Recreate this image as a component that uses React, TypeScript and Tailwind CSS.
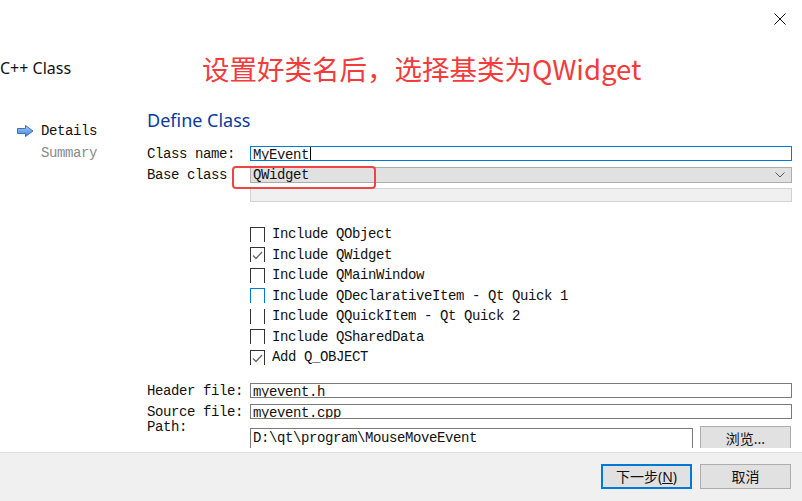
import { Fragment } from 'react'

const mono = "font-['Liberation_Mono','Noto_Sans_CJK_SC',monospace] text-[14px] tracking-[-0.4px] text-[#111]"
const cjk = "font-['Noto_Sans','Noto_Sans_CJK_SC',sans-serif]"

const options = [
    { label: 'Include QObject', box: 'border-t border-x border-[#333]', checked: false },
    { label: 'Include QWidget', box: 'border-t border-x border-[#333]', checked: true },
    { label: 'Include QMainWindow', box: 'border-t border-x border-[#333]', checked: false },
    { label: 'Include QDeclarativeItem - Qt Quick 1', box: 'border-t border-x border-[#0078d7]', checked: false },
    { label: 'Include QQuickItem - Qt Quick 2', box: 'border-x border-[#333]', checked: false },
    { label: 'Include QSharedData', box: 'border-t border-x border-[#333]', checked: false },
    { label: 'Add Q_OBJECT', box: 'border-t border-x border-[#333]', checked: true },
]

function CheckRow({ label, box, checked }: { label: string; box: string; checked: boolean }) {
    return (
        <div className="flex items-center h-[20.5px] pl-[103px]">
            <div className={`w-[15px] h-[15px] shrink-0 ${box}`}>
                {checked && (
                    <svg width="13" height="14" viewBox="0 0 13 14">
                        <polyline points="2,7.5 5,10.5 11,4" fill="none" stroke="#666" strokeWidth="1.3" />
                    </svg>
                )}
            </div>
            <span className={`ml-[7px] leading-[16px] whitespace-pre ${mono}`}>{label}</span>
        </div>
    )
}

function FileRow({ label, value }: { label: string; value: string }) {
    return (
        <div className="flex items-center h-[15px]">
            <span className={`w-[103px] leading-[16px] whitespace-pre ${mono}`}>{label}</span>
            <div className={`w-[542px] h-[15px] border border-[#7a7a7a] pl-[2px] overflow-hidden leading-[16px] ${mono}`}>
                {value}
            </div>
        </div>
    )
}

export default function App() {
    return (
        <div className="w-[802px] h-[501px] bg-white flex flex-col overflow-hidden">
            {/* close */}
            <div className="h-[38px] flex justify-end pt-[13px] pr-[16px] shrink-0">
                <svg width="12" height="12" viewBox="0 0 12 12">
                    <path d="M0.5 0.5 L11.5 11.5 M11.5 0.5 L0.5 11.5" stroke="#111" strokeWidth="1" />
                </svg>
            </div>

            {/* title */}
            <div className="h-[60px] flex items-center shrink-0">
                <span className="w-[202px] font-['Noto_Sans',sans-serif] text-[16px] text-[#111]">C++ Class</span>
                <span className="font-['Noto_Sans_CJK_SC',sans-serif] text-[27.5px] leading-[36px] text-[#f23b3b] whitespace-nowrap">
                    设置好类名后，选择基类为QWidget
                </span>
            </div>

            {/* body */}
            <div className="h-[350px] flex overflow-hidden shrink-0">
                <div className="w-[147px] pt-[23px] flex flex-col gap-[2px] shrink-0">
                    <div className="flex items-center h-[20px]">
                        <svg width="17" height="12" viewBox="0 0 17 12" className="ml-[17px] mr-[7px]">
                            <defs>
                                <linearGradient id="ar" x1="0" y1="0" x2="0" y2="1">
                                    <stop offset="0" stopColor="#a8cdf5" />
                                    <stop offset="1" stopColor="#3f82d6" />
                                </linearGradient>
                            </defs>
                            <polygon points="0.5,3.5 8.5,3.5 8.5,0.5 16,6 8.5,11.5 8.5,8.5 0.5,8.5" fill="url(#ar)" stroke="#3a73bd" strokeWidth="1" />
                        </svg>
                        <span className={`leading-[20px] ${mono}`}>Details</span>
                    </div>
                    <div className={`h-[20px] leading-[20px] pl-[41px] ${mono} !text-[#8a8a8a]`}>Summary</div>
                </div>

                <div className="flex-1 pt-[10px]">
                    <div className="font-['Noto_Sans',sans-serif] text-[18px] leading-[24px] text-[#0a3a9e]">Define Class</div>

                    <div className="mt-[14px] flex items-center h-[15px]">
                        <span className={`w-[103px] leading-[16px] whitespace-pre ${mono}`}>Class name:</span>
                        <div className={`w-[542px] h-[15px] border border-[#0078d7] pl-[2px] overflow-hidden leading-[16px] flex ${mono}`}>
                            MyEvent<span className="w-px h-[13px] bg-black ml-[1px]" />
                        </div>
                    </div>

                    <div className="mt-[6px] flex items-center h-[15px] relative">
                        <span className={`w-[103px] leading-[16px] whitespace-pre ${mono}`}>Base class</span>
                        <div className={`w-[542px] h-[16px] border border-[#adadad] bg-[#e1e1e1] pl-[2px] overflow-hidden leading-[15px] flex justify-between ${mono}`}>
                            <span>QWidget</span>
                            <svg width="10" height="6" viewBox="0 0 10 6" className="mt-[4px] mr-[6px]">
                                <polyline points="0.5,0.5 5,5 9.5,0.5" fill="none" stroke="#555" strokeWidth="1" />
                            </svg>
                        </div>
                        <div className="absolute left-[85px] -top-[1px] w-[144px] h-[23px] border-2 border-[#f04444] rounded-[4px]" />
                    </div>

                    <div className="mt-[6px] ml-[103px] w-[542px] h-[14px] border border-[#d2d2d2] bg-[#f0f0f0]" />

                    <div className="mt-[22px]">
                        {options.map((o) => (
                            <Fragment key={o.label}>
                                <CheckRow {...o} />
                            </Fragment>
                        ))}
                    </div>

                    <div className="mt-[15.5px] flex flex-col gap-[6px]">
                        <FileRow label="Header file:" value="myevent.h" />
                        <FileRow label="Source file:" value="myevent.cpp" />
                    </div>

                    <div className="flex items-start">
                        <span className={`w-[103px] h-[15px] mt-[1px] leading-[15px] ${mono}`}>Path:</span>
                        <div className={`mt-[9px] w-[443px] h-[22px] border border-[#7a7a7a] pl-[2px] pt-[2px] leading-[15px] ${mono}`}>
                            D:\qt\program\MouseMoveEvent
                        </div>
                        <button className={`mt-[7px] ml-[7px] w-[91px] h-[24px] border border-[#adadad] bg-[#e1e1e1] text-[14px] text-[#111] ${cjk}`}>
                            浏览...
                        </button>
                    </div>
                </div>
            </div>

            {/* footer */}
            <div className="mt-[4px] flex-1 border-t border-[#dfdfdf] bg-[#f0f0f0] flex justify-end items-start pt-[11px] pr-[11px] gap-[8px]">
                <button className={`w-[91px] h-[25px] border-2 border-[#0078d7] bg-[#e1e1e1] text-[14px] leading-[20px] text-[#111] ${cjk}`}>
                    下一步(<span className="underline">N</span>)
                </button>
                <button className={`w-[91px] h-[25px] border border-[#adadad] bg-[#e1e1e1] text-[14px] leading-[22px] text-[#111] ${cjk}`}>
                    取消
                </button>
            </div>
        </div>
    )
}
